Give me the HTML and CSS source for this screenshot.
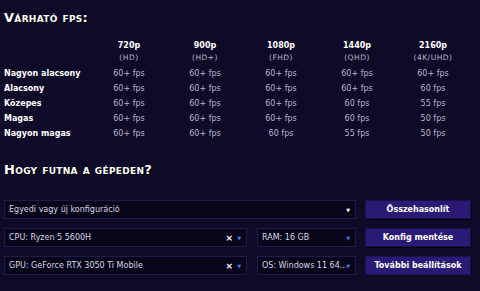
FILE: index.html
```html
<!DOCTYPE html>
<html lang="hu">
<head>
  <meta charset="UTF-8">
  <title>Várható fps</title>
  <link rel="stylesheet" href="styles.css">
</head>
<body>
  <div class="page">
    <h2 class="heading">Várható fps:</h2>

    <!-- FPS table -->
    <div class="fps-table">
      <div class="cell head"></div>
      <div class="cell head"><b>720p</b><span>(HD)</span></div>
      <div class="cell head"><b>900p</b><span>(HD+)</span></div>
      <div class="cell head"><b>1080p</b><span>(FHD)</span></div>
      <div class="cell head"><b>1440p</b><span>(QHD)</span></div>
      <div class="cell head"><b>2160p</b><span>(4K/UHD)</span></div>

      <div class="cell label">Nagyon alacsony</div>
      <div class="cell">60+ fps</div><div class="cell">60+ fps</div><div class="cell">60+ fps</div><div class="cell">60+ fps</div><div class="cell">60+ fps</div>

      <div class="cell label">Alacsony</div>
      <div class="cell">60+ fps</div><div class="cell">60+ fps</div><div class="cell">60+ fps</div><div class="cell">60+ fps</div><div class="cell">60 fps</div>

      <div class="cell label">Közepes</div>
      <div class="cell">60+ fps</div><div class="cell">60+ fps</div><div class="cell">60+ fps</div><div class="cell">60 fps</div><div class="cell">55 fps</div>

      <div class="cell label">Magas</div>
      <div class="cell">60+ fps</div><div class="cell">60+ fps</div><div class="cell">60+ fps</div><div class="cell">60 fps</div><div class="cell">50 fps</div>

      <div class="cell label">Nagyon magas</div>
      <div class="cell">60+ fps</div><div class="cell">60+ fps</div><div class="cell">60 fps</div><div class="cell">55 fps</div><div class="cell">50 fps</div>
    </div>

    <h2 class="heading second">Hogy futna a gépeden?</h2>

    <!-- Config form -->
    <div class="form">
      <div class="form-row">
        <div class="fields">
          <div class="select wide">
            <span class="value">Egyedi vagy új konfiguráció</span>
            <span class="caret white">▼</span>
          </div>
        </div>
        <button class="btn">Összehasonlít</button>
      </div>

      <div class="form-row">
        <div class="fields">
          <div class="select grow">
            <span class="value">CPU: Ryzen 5 5600H</span>
            <span class="clear">×</span>
            <span class="caret">▼</span>
          </div>
          <div class="select small">
            <span class="value">RAM: 16 GB</span>
            <span class="caret">▼</span>
          </div>
        </div>
        <button class="btn">Konfig mentése</button>
      </div>

      <div class="form-row">
        <div class="fields">
          <div class="select grow">
            <span class="value">GPU: GeForce RTX 3050 Ti Mobile</span>
            <span class="clear">×</span>
            <span class="caret">▼</span>
          </div>
          <div class="select small">
            <span class="value">OS: Windows 11 64...</span>
            <span class="caret">▼</span>
          </div>
        </div>
        <button class="btn">További beállítások</button>
      </div>
    </div>
  </div>
</body>
</html>
```

FILE: styles.css
```css
/* Page */
body {
  margin: 0;
  background-color: #0e0a28;
  color: #fff;
  font-family: "DejaVu Sans", Verdana, sans-serif;
  font-size: 8px;
}

.page {
  padding: 10px 9px 0 4px;
}

/* Section headings */
.heading {
  margin: 0;
  font-size: 13px;
  line-height: 16px;
  font-weight: bold;
  font-variant: small-caps;
  letter-spacing: 0.3px;
  text-shadow: 1px 1px 0 #000;
}

.heading.second {
  margin-top: 21px;
}

/* FPS table */
.fps-table {
  display: grid;
  grid-template-columns: 87px repeat(5, 76px);
  margin-top: 14px;
  width: 467px;
}

.cell {
  height: 15px;
  line-height: 15px;
  text-align: center;
  color: #b9b6c8;
}

.cell.head {
  height: 26px;
  display: flex;
  flex-direction: column;
  align-items: center;
}

.cell.head b {
  color: #fff;
  line-height: 12px;
}

.cell.head span {
  font-size: 7.5px;
  letter-spacing: 0.5px;
  line-height: 12px;
  color: #b9b6c8;
}

.cell.label {
  text-align: left;
  color: #fff;
  font-weight: bold;
}

/* Form */
.form {
  margin-top: 22px;
  display: flex;
  flex-direction: column;
  gap: 9px;
}

.form-row {
  display: flex;
  gap: 9px;
  height: 19px;
}

.fields {
  width: 352px;
  display: flex;
  gap: 10px;
}

.select {
  box-sizing: border-box;
  display: flex;
  align-items: center;
  padding: 0 5px 0 4px;
  background-color: #07051a;
  border: 1px solid #221a4c;
  color: #d8d6e4;
  white-space: nowrap;
  overflow: hidden;
}

.select.wide { width: 352px; }
.select.grow { flex: 1; }
.select.small { width: 99px; }

.select .value {
  flex: 1;
  overflow: hidden;
}

.clear {
  color: #fff;
  font-weight: bold;
  font-size: 9px;
  margin-right: 4px;
}

.caret {
  font-size: 5px;
  color: #3f7df0;
}

.caret.white {
  color: #fff;
}

/* Buttons */
.btn {
  width: 106px;
  height: 19px;
  padding: 0;
  border: 1px solid #1a1150;
  background-color: #2a1a76;
  color: #fff;
  font-family: "DejaVu Sans", Verdana, sans-serif;
  font-size: 8px;
  font-weight: bold;
  box-shadow: 1px 1px 0 #050310;
}
```
